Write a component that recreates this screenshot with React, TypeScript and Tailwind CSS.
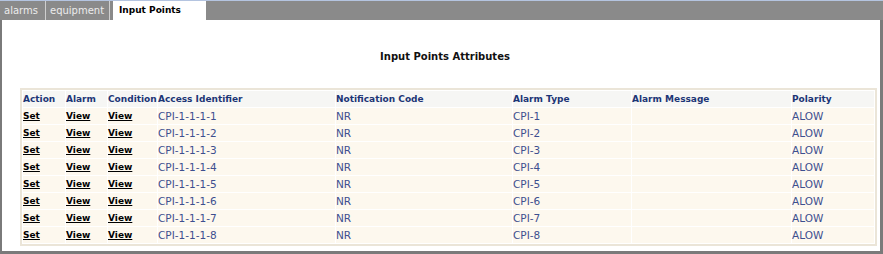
import React from "react";

const cols = [
  { label: "Action", w: "w-[42px]" },
  { label: "Alarm", w: "w-[41px]" },
  { label: "Condition", w: "w-[49px]" },
  { label: "Access Identifier", w: "w-[177px]" },
  { label: "Notification Code", w: "w-[176px]" },
  { label: "Alarm Type", w: "w-[118px]" },
  { label: "Alarm Message", w: "w-[159px]" },
  { label: "Polarity", w: "" },
];

const rows = Array.from({ length: 8 }, (_, i) => ({
  aid: `CPI-1-1-1-${i + 1}`,
  code: "NR",
  type: `CPI-${i + 1}`,
  msg: "",
  polarity: "ALOW",
}));

function Tab({ label, width, active }: { label: string; width: string; active?: boolean }) {
  return (
    <div
      className={
        active
          ? `${width} h-[19px] bg-white pl-[6px] ml-[3px] text-[9px] font-bold leading-[19px] text-black`
          : `${width} h-[19px] pl-[4px] text-[10px] leading-[19px] text-[#ececec] border-r border-[#cfcfcf]`
      }
    >
      {label}
    </div>
  );
}

export default function App() {
  return (
    <div
      className="w-[883px] h-[254px] bg-white flex flex-col overflow-hidden"
      style={{ fontFamily: '"DejaVu Sans", Verdana, sans-serif' }}
    >
      {/* tab strip */}
      <div className="h-[20px] bg-[#8a8a8a] border-t border-[#b4c4e0] flex">
        <Tab label="alarms" width="w-[46px]" />
        <Tab label="equipment" width="w-[64px]" />
        <Tab label="Input Points" width="w-[93px]" active />
      </div>

      {/* content panel */}
      <div className="flex-1 border-l-2 border-r-[3px] border-b-[3px] border-[#7a7a7a] flex flex-col">
        <h1 className="text-center text-[10px] font-bold text-[#111] mt-[29px] ml-[8px]">
          Input Points Attributes
        </h1>

        <div className="ml-[18px] mr-[3px] mt-[24px] border-2 border-[#ebe5d8]">
          <table className="w-full table-fixed border-separate border-spacing-[1px] bg-white text-[10px] leading-[16px]">
            <thead>
              <tr className="bg-[#f6f6f4]">
                {cols.map((c) => (
                  <th
                    key={c.label}
                    className={`${c.w} text-left text-[9px] font-bold text-[#1c3576] p-0 h-[16px] whitespace-nowrap`}
                  >
                    {c.label}
                  </th>
                ))}
              </tr>
            </thead>
            <tbody>
              {rows.map((r) => (
                <tr key={r.aid} className="bg-[#fdf8ee]">
                  <td className="p-0 h-[16px] text-[9px] font-bold text-black underline">Set</td>
                  <td className="p-0 text-[9px] font-bold text-black underline">View</td>
                  <td className="p-0 text-[9px] font-bold text-black underline">View</td>
                  <td className="p-0 text-[10.5px] text-[#3d4f8f]">{r.aid}</td>
                  <td className="p-0 text-[10.5px] text-[#3d4f8f]">{r.code}</td>
                  <td className="p-0 text-[10.5px] text-[#3d4f8f]">{r.type}</td>
                  <td className="p-0 text-[10.5px] text-[#3d4f8f]">{r.msg}</td>
                  <td className="p-0 text-[10.5px] text-[#3d4f8f]">{r.polarity}</td>
                </tr>
              ))}
            </tbody>
          </table>
        </div>
      </div>
    </div>
  );
}
